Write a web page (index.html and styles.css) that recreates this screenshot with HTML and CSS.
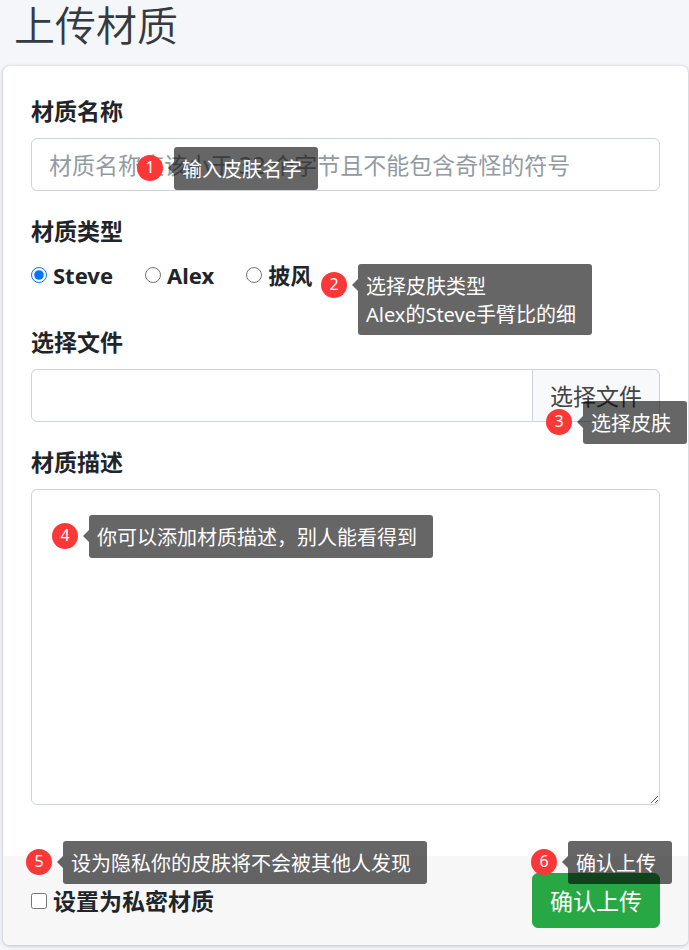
FILE: index.html
```html
<!DOCTYPE html>
<html lang="zh-CN">
<head>
<meta charset="utf-8">
<meta name="viewport" content="width=device-width, initial-scale=1">
<title>上传材质</title>
<link rel="stylesheet" href="styles.css">
</head>
<body>
<h1 class="title">上传材质</h1>
<form class="card">
  <div class="card-body">
    <div class="group">
      <label class="label" for="name">材质名称</label>
      <input class="control" id="name" type="text" placeholder="材质名称应该小于 32 个字节且不能包含奇怪的符号">
      <div class="note note-name"><span class="badge">1</span><p class="tip">输入皮肤名字</p></div>
    </div>
    <fieldset class="group group-type">
      <legend class="label">材质类型</legend>
      <div class="radios">
        <label class="choice"><input type="radio" name="type" checked>Steve</label>
        <label class="choice"><input type="radio" name="type">Alex</label>
        <label class="choice"><input type="radio" name="type">披风</label>
        <div class="note note-type"><span class="badge">2</span><p class="tip">选择皮肤类型<br>Alex的Steve手臂比的细</p></div>
      </div>
    </fieldset>
    <div class="group">
      <label class="label" for="file">选择文件</label>
      <div class="file">
        <input class="control file-name" id="file" type="text" readonly>
        <button class="file-button" type="button">选择文件</button>
      </div>
      <div class="note note-file"><span class="badge">3</span><p class="tip">选择皮肤</p></div>
    </div>
    <div class="group">
      <label class="label" for="description">材质描述</label>
      <textarea class="control description" id="description"></textarea>
      <div class="note note-description"><span class="badge">4</span><p class="tip">你可以添加材质描述，别人能看得到</p></div>
    </div>
  </div>
  <div class="card-footer">
    <label class="choice"><input type="checkbox">设置为私密材质</label>
    <button class="submit" type="submit">确认上传</button>
    <div class="note note-private"><span class="badge">5</span><p class="tip">设为隐私你的皮肤将不会被其他人发现</p></div>
    <div class="note note-submit"><span class="badge">6</span><p class="tip">确认上传</p></div>
  </div>
</form>
</body>
</html>
```
FILE: styles.css
```css
* {
  box-sizing: border-box;
}

body {
  margin: 0;
  padding: 0 1px 5px 3px;
  background: #f4f6f9;
  color: #212529;
  font-family: "Noto Sans", "Noto Sans CJK SC", sans-serif;
  font-size: 23px;
  line-height: 34px;
}

input,
button,
textarea {
  margin: 0;
  font: inherit;
  color: inherit;
}

.title {
  margin: 0;
  padding: 0 0 12px 11px;
  color: #343a40;
  font-family: "Liberation Sans", "Noto Sans CJK SC", sans-serif;
  font-size: 41px;
  font-weight: 350;
  line-height: 54px;
}

.card {
  border-radius: 6px;
  background: #fff;
  box-shadow: 0 0 1px rgba(0, 0, 0, 0.25), 0 1px 4px rgba(0, 0, 0, 0.2);
}

.card-body {
  padding: 28px 28px 51px;
}

.group {
  position: relative;
  min-width: 0;
  margin: 0 0 23px;
  padding: 0;
  border: 0;
}

.group:last-child {
  margin-bottom: 0;
}

.group-type {
  margin-bottom: 33px;
}

.label {
  display: block;
  margin-bottom: 10px;
  padding: 0;
  font-weight: 700;
}

.control {
  display: block;
  width: 100%;
  height: 53px;
  padding: 8px 17px;
  border: 1px solid #ced4da;
  border-radius: 6px;
  background: #fff;
}

.control::placeholder {
  color: #939ba2;
  opacity: 1;
}

.radios {
  position: relative;
  display: flex;
  gap: 32px;
}

.choice {
  display: flex;
  align-items: center;
  gap: 6px;
  font-weight: 700;
}

.radios .choice {
  font-size: 22px;
}

.choice input {
  width: 16px;
  height: 16px;
}

.file {
  display: flex;
}

.file-name {
  flex: 1;
  min-width: 0;
  border-radius: 6px 0 0 6px;
}

.file-button {
  padding: 8px 17px;
  border: 1px solid #ced4da;
  border-left: 0;
  border-radius: 0 6px 6px 0;
  background: #f8f9fa;
  color: #444;
}

.description {
  height: 316px;
  resize: vertical;
}

.card-footer {
  position: relative;
  display: flex;
  align-items: center;
  justify-content: space-between;
  padding: 17px 28px;
  border-radius: 0 0 6px 6px;
  background: #f7f7f7;
}

.submit {
  height: 55px;
  padding: 0 17px;
  border: 1px solid #28a745;
  border-radius: 6px;
  background: #28a745;
  color: #fff;
}

.note {
  position: absolute;
  z-index: 1;
  display: flex;
  align-items: flex-start;
  gap: 11px;
  color: #fff;
  white-space: nowrap;
}

.badge {
  width: 26px;
  height: 26px;
  margin-top: 8px;
  border-radius: 50%;
  background: #fc3737;
  font-size: 16px;
  line-height: 24px;
  text-align: center;
}

.tip {
  position: relative;
  margin: 0;
  padding: 9px 16px 6px 8px;
  border-radius: 3px;
  background: rgba(0, 0, 0, 0.6);
  font-size: 20px;
  line-height: 28px;
}

.tip::before {
  content: "";
  position: absolute;
  top: 15px;
  right: 100%;
  border: 6px solid transparent;
  border-left: 0;
  border-right-color: rgba(0, 0, 0, 0.6);
}

.note-name {
  top: 53px;
  left: 106px;
}

.note-type {
  top: 6px;
  left: 290px;
}

.note-file {
  top: 76px;
  right: -27px;
}

.note-description {
  top: 70px;
  left: 21px;
}

.note-private {
  top: -15px;
  left: 23px;
}

.note-submit {
  top: -15px;
  right: 16px;
}
```
